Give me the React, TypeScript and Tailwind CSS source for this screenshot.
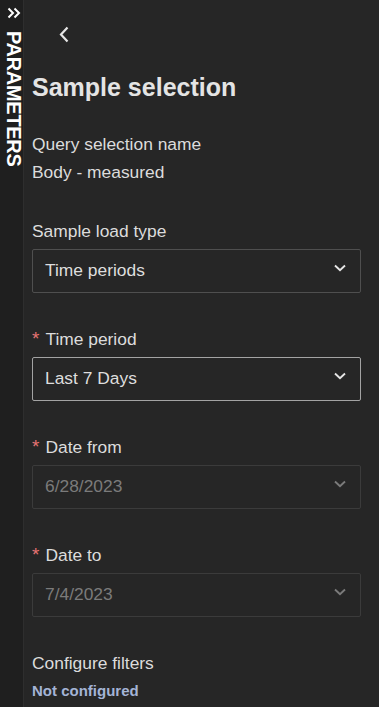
const font = { fontFamily: '"Liberation Sans", Arial, sans-serif' };

type FieldProps = {
  label: string;
  value: string;
  required?: boolean;
  state?: "normal" | "focused" | "disabled";
};

const Chevron = ({ className }: { className: string }) => (
  <svg width="12" height="8" viewBox="0 0 12 8" fill="none" className={className}>
    <path d="M1 1.5 6 6.2l5-4.7" stroke="currentColor" strokeWidth="1.9" />
  </svg>
);

const SelectField = ({ label, value, required, state = "normal" }: FieldProps) => {
  const box =
    state === "focused"
      ? "border-[#a3a3a3]"
      : state === "disabled"
      ? "border-[#3b3b3b]"
      : "border-[#4f4f4f]";
  const text = state === "disabled" ? "text-[#7b7b7b]" : "text-[#dedede]";
  const icon = state === "disabled" ? "text-[#7b7b7b]" : "text-[#e6e6e6]";

  return (
    <div className="flex flex-col">
      <label className="flex items-center h-6 text-[17.4px] text-[#dcdcdc]">
        {required && <span className="text-[#e57373] mr-[6px] text-[19px]">*</span>}
        {label}
      </label>
      <div
        className={`mt-1.5 h-[44px] flex items-center justify-between border rounded-[2px] pl-3 pr-[14px] ${box}`}
      >
        <span className={`text-[17.4px] -translate-y-[1px] ${text}`}>{value}</span>
        <Chevron className={`-translate-y-[3px] ${icon}`} />
      </div>
    </div>
  );
};

export default function App() {
  return (
    <div className="flex w-[379px] h-[707px] bg-[#262626] overflow-hidden" style={font}>
      {/* collapsed side strip */}
      <div className="w-6 shrink-0 bg-[#1f1f1f] border-r border-[#2e2e2e] flex flex-col items-center pt-[7px]">
        <svg width="14" height="12" viewBox="0 0 14 12" fill="none" className="text-white ml-1">
          <path d="M1.5 1.5 6 6 1.5 10.5M7.5 1.5 12 6 7.5 10.5" stroke="currentColor" strokeWidth="2" />
        </svg>
        <span
          className="mt-[12px] ml-[4px] text-white font-bold text-[20px] leading-none tracking-[-0.3px]"
          style={{ writingMode: "vertical-rl" }}
        >
          PARAMETERS
        </span>
      </div>

      {/* main panel */}
      <div className="flex-1 pl-[8px] pr-[18px]">
        <button className="mt-[25px] ml-[27px] h-[18px] w-[12px] flex items-center text-[#e6e6e6]">
          <svg width="10" height="17" viewBox="0 0 10 17" fill="none">
            <path d="M8.5 1.5 2 8.5l6.5 7" stroke="currentColor" strokeWidth="2.2" />
          </svg>
        </button>

        <h1 className="mt-[28px] text-[25px] leading-8 font-bold text-[#e4e4e4]">Sample selection</h1>

        <div className="mt-[29px] flex flex-col">
          <span className="h-6 flex items-center text-[17.4px] text-[#dcdcdc]">Query selection name</span>
          <span className="mt-1 h-6 flex items-center text-[17.4px] text-[#dcdcdc]">Body - measured</span>
        </div>

        <div className="mt-[35px] flex flex-col gap-[34px]">
          <SelectField label="Sample load type" value="Time periods" />
          <SelectField label="Time period" value="Last 7 Days" required state="focused" />
          <SelectField label="Date from" value="6/28/2023" required state="disabled" />
          <SelectField label="Date to" value="7/4/2023" required state="disabled" />
          <div className="flex flex-col">
            <span className="h-6 flex items-center text-[17.4px] text-[#dcdcdc]">Configure filters</span>
            <span className="mt-[4px] h-6 flex items-center text-[15px] font-bold text-[#a4b4d6]">
              Not configured
            </span>
          </div>
        </div>
      </div>
    </div>
  );
}
